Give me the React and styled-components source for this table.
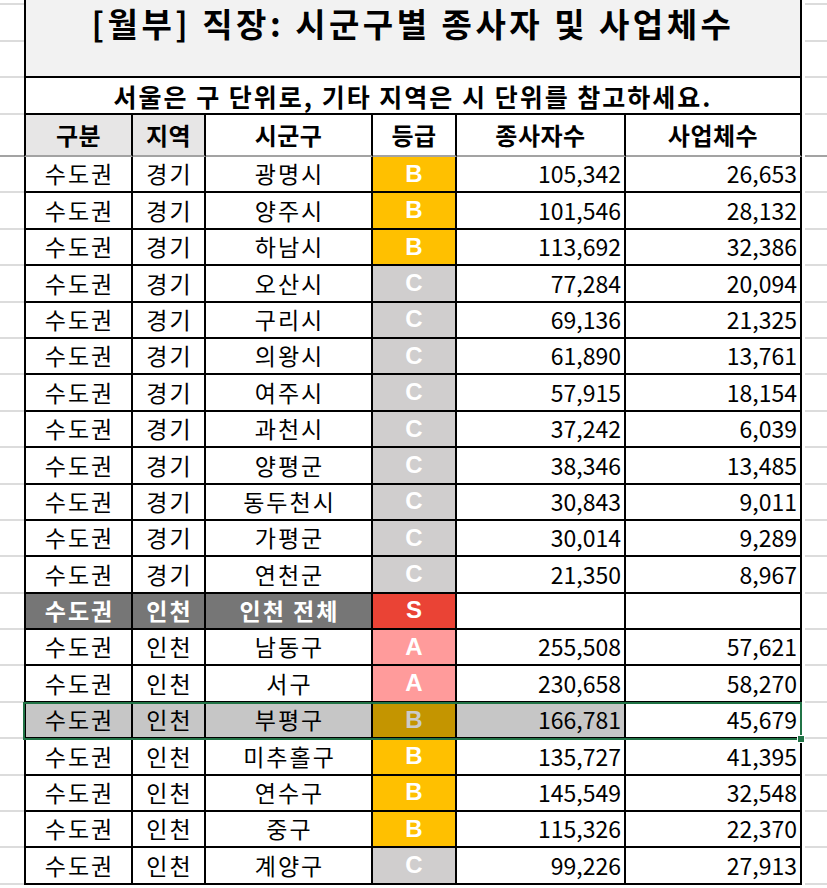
import React from "react";
import styled, { createGlobalStyle } from "styled-components";

const GlobalStyle = createGlobalStyle`
  html, body {
    margin: 0;
    padding: 0;
    background: #fff;
    overflow: hidden;
  }
  body {
    font-family: "Noto Sans CJK KR", "Noto Sans", sans-serif;
    color: #000;
  }
`;

const GRADE_BG = { S: "#ea4335", A: "#ff9b9b", B: "#ffc000", C: "#d0cece" };
const GRADE_BG_SELECTED = { S: "#b7342a", A: "#c77979", B: "#c49500", C: "#a2a0a0" };

// 구분, 지역, 시군구, 등급, 종사자수, 사업체수
const rows = [
  { cells: ["수도권", "경기", "광명시", "B", "105,342", "26,653"] },
  { cells: ["수도권", "경기", "양주시", "B", "101,546", "28,132"] },
  { cells: ["수도권", "경기", "하남시", "B", "113,692", "32,386"] },
  { cells: ["수도권", "경기", "오산시", "C", "77,284", "20,094"] },
  { cells: ["수도권", "경기", "구리시", "C", "69,136", "21,325"] },
  { cells: ["수도권", "경기", "의왕시", "C", "61,890", "13,761"] },
  { cells: ["수도권", "경기", "여주시", "C", "57,915", "18,154"] },
  { cells: ["수도권", "경기", "과천시", "C", "37,242", "6,039"] },
  { cells: ["수도권", "경기", "양평군", "C", "38,346", "13,485"] },
  { cells: ["수도권", "경기", "동두천시", "C", "30,843", "9,011"] },
  { cells: ["수도권", "경기", "가평군", "C", "30,014", "9,289"] },
  { cells: ["수도권", "경기", "연천군", "C", "21,350", "8,967"] },
  { cells: ["수도권", "인천", "인천 전체", "S", "", ""], total: true },
  { cells: ["수도권", "인천", "남동구", "A", "255,508", "57,621"] },
  { cells: ["수도권", "인천", "서구", "A", "230,658", "58,270"] },
  { cells: ["수도권", "인천", "부평구", "B", "166,781", "45,679"], selected: true },
  { cells: ["수도권", "인천", "미추홀구", "B", "135,727", "41,395"] },
  { cells: ["수도권", "인천", "연수구", "B", "145,549", "32,548"] },
  { cells: ["수도권", "인천", "중구", "B", "115,326", "22,370"] },
  { cells: ["수도권", "인천", "계양구", "C", "99,226", "27,913"] },
];

const headers = [
  { label: "구분", shaded: true },
  { label: "지역", shaded: true },
  { label: "시군구" },
  { label: "등급" },
  { label: "종사자수" },
  { label: "사업체수" },
];

const GRID = "#dcdcdc";
const FREEZE = "#a3a3a3";
const LINE = "2px solid #000";
const FIRST_DATA_ROW = 6;

const App = () => {
  const selectedIndex = rows.findIndex((r) => r.selected);

  return (
    <>
      <GlobalStyle />
      <Sheet>
        {/* rows 1-3: merged title */}
        {[1, 2, 3].map((r) => (
          <React.Fragment key={`g${r}`}>
            <GutterCell $row={r} />
            <GutterCell $row={r} $right />
          </React.Fragment>
        ))}
        <TitleCell>[월부] 직장: 시군구별 종사자 및 사업체수</TitleCell>

        {/* row 4: note */}
        <GutterCell $row={4} />
        <GutterCell $row={4} $right />
        <NoteCell>서울은 구 단위로, 기타 지역은 시 단위를 참고하세요.</NoteCell>

        {/* row 5: column headers (frozen pane line below) */}
        <GutterCell $row={5} $freeze />
        <GutterCell $row={5} $right $freeze />
        {headers.map((h, i) => (
          <HeaderCell
            key={h.label}
            $row={5}
            $col={i + 2}
            $first={i === 0}
            $shaded={h.shaded}
          >
            {h.label}
          </HeaderCell>
        ))}

        {rows.map((row, r) => {
          const gridRow = r + FIRST_DATA_ROW;
          const [area, region, city, grade, workers, companies] = row.cells;
          const sel = row.selected;
          const textBg = row.total ? "#767676" : sel ? "#c6c6c6" : "#fff";
          return (
            <React.Fragment key={city}>
              <GutterCell $row={gridRow} />
              <GutterCell $row={gridRow} $right />
              <Cell $row={gridRow} $col={2} $first $bg={textBg} $total={row.total}>
                {area}
              </Cell>
              <Cell $row={gridRow} $col={3} $bg={textBg} $total={row.total}>
                {region}
              </Cell>
              <Cell $row={gridRow} $col={4} $bg={textBg} $total={row.total}>
                {city}
              </Cell>
              <GradeCell
                $row={gridRow}
                $col={5}
                $bg={sel ? GRADE_BG_SELECTED[grade] : GRADE_BG[grade]}
                $ink={sel ? "#cbcbcb" : "#fff"}
              >
                {grade}
              </GradeCell>
              <NumberCell $row={gridRow} $col={6} $bg={sel ? "#c6c6c6" : "#fff"}>
                {workers}
              </NumberCell>
              <NumberCell $row={gridRow} $col={7} $bg="#fff">
                {companies}
              </NumberCell>
            </React.Fragment>
          );
        })}

        <Selection $row={selectedIndex + FIRST_DATA_ROW}>
          <FillHandle />
        </Selection>
      </Sheet>
    </>
  );
};

const Sheet = styled.div`
  display: grid;
  grid-template-columns: 24px 109px 73px 167px 84px 169px 176px 25px;
  grid-template-rows: 5px 37px 36px 37px 42px repeat(20, 36.4px) 10px;
  width: 827px;
  height: 888px;
  overflow: hidden;
`;

const GutterCell = styled.div`
  grid-row: ${(p) => p.$row};
  grid-column: ${(p) => (p.$right ? 8 : 1)};
  box-sizing: border-box;
  border-bottom: 2px solid ${(p) => (p.$freeze ? FREEZE : GRID)};
  margin-left: ${(p) => (p.$right ? "3px" : "0")};
`;

const BaseCell = styled.div`
  grid-row: ${(p) => p.$row};
  grid-column: ${(p) => p.$col};
  box-sizing: border-box;
  display: flex;
  align-items: center;
  justify-content: center;
  border-right: ${LINE};
  border-bottom: ${LINE};
  border-left: ${(p) => (p.$first ? LINE : "none")};
  line-height: 1.2;
  white-space: nowrap;
  overflow: hidden;
`;

const TitleCell = styled(BaseCell)`
  grid-row: 1 / 4;
  grid-column: 2 / 8;
  border-left: ${LINE};
  align-items: flex-start;
  padding-top: 4px;
  background: #f2f2f2;
  font-size: 33px;
  font-weight: 700;
  letter-spacing: 3.5px;
`;

const NoteCell = styled(BaseCell)`
  grid-row: 4;
  grid-column: 2 / 8;
  border-left: ${LINE};
  background: #fff;
  font-size: 25px;
  font-weight: 700;
  letter-spacing: 2px;
`;

const HeaderCell = styled(BaseCell)`
  border-bottom: 2px solid ${FREEZE};
  background: ${(p) => (p.$shaded ? "#e7e6e6" : "#fff")};
  font-size: 24px;
  font-weight: 700;
  letter-spacing: 0.5px;
`;

const Cell = styled(BaseCell)`
  background: ${(p) => p.$bg};
  color: ${(p) => (p.$total ? "#fff" : "#000")};
  font-size: 23px;
  font-weight: ${(p) => (p.$total ? 700 : 400)};
  letter-spacing: 2px;
  padding-left: 2px;
`;

const GradeCell = styled(BaseCell)`
  background: ${(p) => p.$bg};
  color: ${(p) => p.$ink};
  font-family: "Liberation Sans", Arial, sans-serif;
  font-size: 24px;
  font-weight: 700;
`;

const NumberCell = styled(BaseCell)`
  justify-content: flex-end;
  padding-right: 3px;
  background: ${(p) => p.$bg};
  font-size: 23px;
  letter-spacing: 0;
`;

const Selection = styled.div`
  grid-row: ${(p) => p.$row};
  grid-column: 2 / 8;
  position: relative;
  margin: -1px 0 -1px -1px;
  border: 2px solid #217346;
  pointer-events: none;
  z-index: 2;
`;

const FillHandle = styled.div`
  position: absolute;
  right: -5px;
  bottom: -5px;
  width: 6px;
  height: 6px;
  background: #217346;
  border: 1px solid #fff;
`;

export default App;
